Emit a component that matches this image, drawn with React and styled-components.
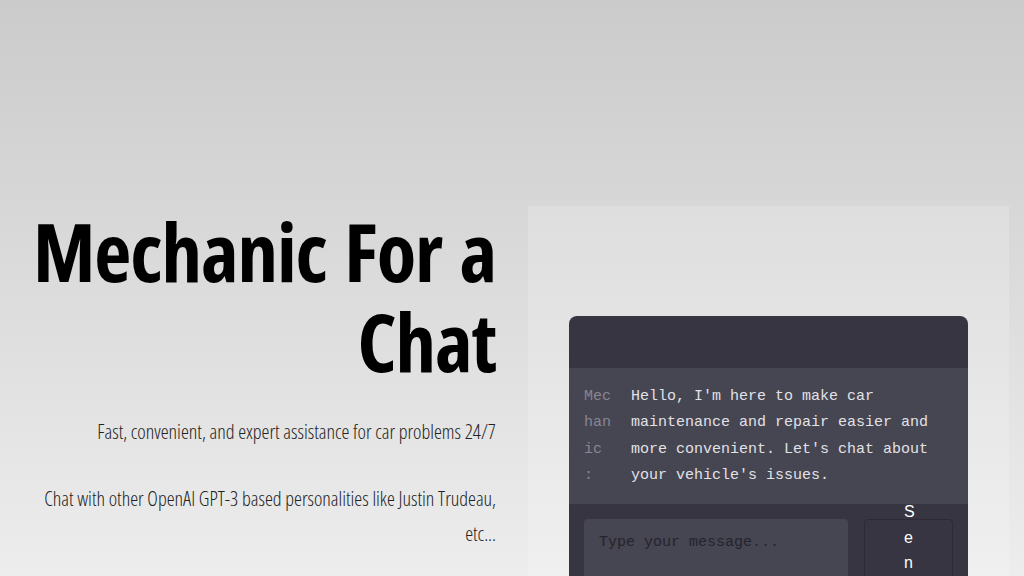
import React from "react";
import styled, { createGlobalStyle } from "styled-components";

const GlobalStyle = createGlobalStyle`
  html, body {
    margin: 0;
    padding: 0;
  }
  body {
    background: linear-gradient(180deg, #cbcbcb 0%, #d7d7d7 36%, #ededed 100%);
    min-height: 100vh;
    font-family: "Open Sans", "DejaVu Sans Condensed", sans-serif;
    font-stretch: 75%;
    overflow: hidden;
  }
`;

const Page = styled.main`
  display: grid;
  grid-template-columns: 528px 481px;
  padding-top: 206px;
  height: 576px;
  box-sizing: border-box;
`;

const Intro = styled.section`
  text-align: right;
  padding: 0 32px 0 26px;
  color: #111;
`;

const Title = styled.h1`
  margin: 0;
  font-size: 81px;
  line-height: 90px;
  font-weight: 700;
  letter-spacing: -1.1px;
  word-spacing: 4px;
  color: #000;
`;

const Lead = styled.p`
  margin: ${(p) => (p.first ? "28px 0 0" : "32px 0 0")};
  font-size: 20px;
  line-height: 35px;
  font-weight: 300;
  color: #222;
`;

const Panel = styled.section`
  background: rgba(255, 255, 255, 0.18);
  padding: 110px 41px 0;
`;

const ChatBox = styled.div`
  background: #363541;
  border-radius: 8px 8px 0 0;
  overflow: hidden;
  font-family: "Liberation Mono", "DejaVu Sans Mono", monospace;
  font-stretch: normal;
  font-size: 15px;
`;

const ChatHeader = styled.div`
  height: 52px;
`;

const Messages = styled.div`
  background: #464552;
  padding: 16px 15px 15px;
`;

const Message = styled.div`
  display: grid;
  grid-template-columns: 27px 1fr;
  column-gap: 20px;
  line-height: 26.3px;
`;

const Sender = styled.span`
  color: #878692;
  word-break: break-all;
`;

const Colon = styled.span`
  display: block;
`;

const Text = styled.span`
  color: #e2e2e6;
  padding-right: 10px;
`;

const Composer = styled.form`
  display: flex;
  gap: 16px;
  padding: 15px 15px 0;
`;

const Input = styled.textarea`
  width: 264px;
  height: 80px;
  box-sizing: border-box;
  resize: none;
  border: none;
  border-radius: 4px;
  background: #464552;
  padding: 15px 15px;
  font-family: inherit;
  font-size: 15px;
  color: #eee;
  outline: none;
  &::placeholder {
    color: #25242c;
  }
`;

const SendButton = styled.button`
  width: 89px;
  height: 62px;
  flex-shrink: 0;
  display: flex;
  align-items: center;
  justify-content: center;
  background: #363541;
  border: 1px solid #2c2b35;
  border-radius: 4px;
  color: #fff;
  font-family: "Liberation Sans", Arial, sans-serif;
  font-size: 16px;
  padding: 0;
  span {
    width: 1ch;
    word-break: break-all;
    line-height: 25.5px;
    text-align: center;
  }
`;

export default function App() {
  return (
    <>
      <GlobalStyle />
      <Page>
        <Intro>
          <Title>Mechanic For a Chat</Title>
          <Lead first>Fast, convenient, and expert assistance for car problems 24/7</Lead>
          <Lead>Chat with other OpenAI GPT-3 based personalities like Justin Trudeau, etc...</Lead>
        </Intro>
        <Panel>
          <ChatBox>
            <ChatHeader />
            <Messages>
              <Message>
                <Sender>
                  Mechanic<Colon>:</Colon>
                </Sender>
                <Text>
                  Hello, I'm here to make car maintenance and repair easier and more convenient. Let's chat about your vehicle's issues.
                </Text>
              </Message>
            </Messages>
            <Composer onSubmit={(e) => e.preventDefault()}>
              <Input placeholder="Type your message..." />
              <SendButton type="submit">
                <span>Send</span>
              </SendButton>
            </Composer>
          </ChatBox>
        </Panel>
      </Page>
    </>
  );
}
